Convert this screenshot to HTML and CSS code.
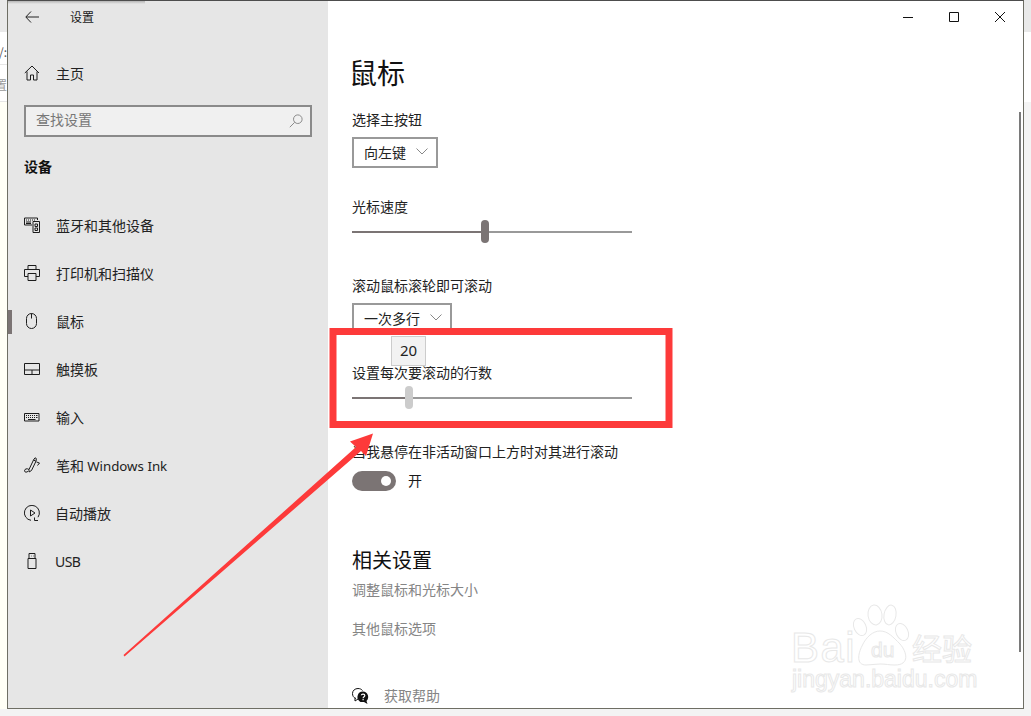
FILE: index.html
```html
<!DOCTYPE html>
<html lang="zh-CN">
<head>
<meta charset="utf-8">
<title>设置</title>
<link rel="stylesheet" href="styles.css">
</head>
<body>
<div class="desktop">
  <div class="strip strip-left">
    <div class="seg seg-top"></div>
    <div class="seg seg-addr"><span>:/</span></div>
    <div class="seg seg-menu"><span>置</span></div>
    <div class="seg seg-page"></div>
  </div>
  <div class="window">
    <aside class="sidebar">
      <div class="titlebar">
        <svg class="back" width="14" height="12" viewBox="0 0 14 12"><path d="M6 .5.8 6 6 11.500M1 6h13"/></svg>
        <span class="apptitle">设置</span>
      </div>
      <a class="row home">
        <svg class="ico" width="16" height="16" viewBox="0 0 16 16"><path d="M.8 8 8 1l7 7M3 6.500V15h3.500v-5h3v5H13V6.500"/></svg>
        <span>主页</span>
      </a>
      <div class="search">
        <span>查找设置</span>
        <svg class="ico-search" width="14" height="14" viewBox="0 0 14 14"><circle cx="8.800" cy="5.200" r="4.300"/><path d="M5.700 8.300.8 13.200"/></svg>
      </div>
      <h2 class="section">设备</h2>
      <nav class="nav">
        <a class="row">
          <svg class="ico" width="16" height="16" viewBox="0 0 16 16"><path d="M.5 1h13v2M.5 1v7H8M9 4.500h6.500v11H9zM2 3h1M4 3h1M6 3h1M8 3h1M10 3h1M2 5h5M2 6.500h5M11 7h2.500v2.500H11zM11 11h2.500v2.500H11z"/></svg>
          <span>蓝牙和其他设备</span>
        </a>
        <a class="row">
          <svg class="ico" width="16" height="16" viewBox="0 0 16 16"><path d="M4 4.500V.5h8v4M4 11.500H.5v-7h15v7H12M4 8.500h8v7H4z"/></svg>
          <span>打印机和扫描仪</span>
        </a>
        <a class="row active">
          <svg class="ico" width="16" height="16" viewBox="0 0 16 16"><path d="M2.500 5.500a5 5 0 0 1 10 0v5a5 5 0 0 1-10 0zM7.500 .5v5"/></svg>
          <span>鼠标</span>
        </a>
        <a class="row">
          <svg class="ico" width="16" height="16" viewBox="0 0 16 16"><path d="M.5 2.500h15v11H.5zM.5 9h15M8 9v4.500"/></svg>
          <span>触摸板</span>
        </a>
        <a class="row">
          <svg class="ico" width="16" height="16" viewBox="0 0 16 16"><path d="M.5 4.500h14.500v7.500H.5zM2 6.500h1M4 6.500h1M6 6.500h1M8 6.500h1M10 6.500h1M12 6.500h1.500M2 8.500h1M4 8.500h1M6 8.500h1M8 8.500h1M10 8.500h1M12 8.500h1.500M4 10.500h7.500"/></svg>
          <span>输入</span>
        </a>
        <a class="row">
          <svg class="ico" width="16" height="16" viewBox="0 0 16 16"><path d="M5 12.500 9.500 3 11 .8l1.300.7-.2 2.500L7.500 13.500l-2.500 1.500zM9.500 3l2.500 1.300M12.500 5l3 1-2 2.500M5 12.500c-2-1.500-4.500-.5-4.500 1.300 0 1.700 2.500 1.700 3.500.5"/></svg>
          <span>笔和 <b class="latin">Windows Ink</b></span>
        </a>
        <a class="row">
          <svg class="ico" width="16" height="16" viewBox="0 0 16 16"><path d="M7 15.300A7.500 7.500 0 1 1 14 12.200M6.500 5v6l4.500-3zM10.500 12.500v3h3.500"/></svg>
          <span class="tight">自动播放</span>
        </a>
        <a class="row">
          <svg class="ico" width="16" height="16" viewBox="0 0 16 16"><path d="M4 5.500h8v10H4zM5 5.500V.5h6v5M7 3h.5M9 3h.5"/></svg>
          <span class="tight latin">USB</span>
        </a>
      </nav>
    </aside>
    <main class="main">
      <div class="controls">
        <span class="ctl"><svg width="10" height="10" viewBox="0 0 10 10"><path d="M0 5.500h10"/></svg></span>
        <span class="ctl"><svg width="10" height="10" viewBox="0 0 10 10"><path d="M.5.500h9v9h-9z"/></svg></span>
        <span class="ctl"><svg width="10" height="10" viewBox="0 0 10 10"><path d="m0 0 10 10M10 0 0 10"/></svg></span>
      </div>
      <h1 class="title">鼠标</h1>
      <div class="label first">选择主按钮</div>
      <div class="select">
        <span>向左键</span>
        <svg width="12" height="7" viewBox="0 0 12 7"><path d="m.5.500 5.500 5.500 5.500-5.500"/></svg>
      </div>
      <div class="label gap">光标速度</div>
      <div class="slider">
        <div class="fill" style="width:129px"></div>
        <div class="thumb"></div>
        <div class="rest"></div>
      </div>
      <div class="label gap-lg">滚动鼠标滚轮即可滚动</div>
      <div class="select">
        <span>一次多行</span>
        <svg width="12" height="7" viewBox="0 0 12 7"><path d="m.5.500 5.500 5.500 5.500-5.500"/></svg>
      </div>
      <div class="label gap">设置每次要滚动的行数</div>
      <div class="slider">
        <div class="fill" style="width:53px"></div>
        <div class="thumb thumb-light"></div>
        <div class="rest"></div>
        <div class="tip">20</div>
      </div>
      <div class="label gap-lg">当我悬停在非活动窗口上方时对其进行滚动</div>
      <div class="toggle-row">
        <div class="toggle"><div class="knob"></div></div>
        <span>开</span>
      </div>
      <h2 class="subtitle">相关设置</h2>
      <a class="link link-first">调整鼠标和光标大小</a>
      <a class="link link-second">其他鼠标选项</a>
      <div class="help">
        <svg width="17" height="16" viewBox="0 0 17 16"><path class="help-o" d="M4 10.500C1.500 9.500.5 8 .5 5.500.5 2.500 3 .5 6 .5c2 0 3.500.8 4.500 2M3 10v3l3-2"/><path class="help-f" d="M11 3.500a5.500 5.500 0 0 0-2.500 10.400H12l3.500 2-1-3A5.500 5.500 0 0 0 11 3.500z"/><path class="help-q" d="M9.300 7.300c.2-1.700 3.500-1.700 3.500.2 0 1.300-1.700 1.300-1.700 2.700M11.100 11v1.200"/></svg>
        <span>获取帮助</span>
      </div>
      <div class="scrollbar"></div>
    </main>
  </div>
  <div class="strip strip-right">
    <div class="seg seg-top"></div>
    <div class="seg seg-white"></div>
    <div class="seg seg-dots"></div>
  </div>
  <div class="strip-bottom"></div>

  <svg class="annot" width="1031" height="716" viewBox="0 0 1031 716">
    <rect class="annot-box" x="333" y="331.500" width="336" height="93"/>
    <polygon class="annot-arrow" points="373,433.500 350,441.500 356,447 123.500,655 124.500,656.500 361,451 366,456"/>
    <g class="wm">
      <ellipse cx="875" cy="615" rx="7" ry="10" transform="rotate(-8 875 615)"/>
      <ellipse cx="890" cy="615" rx="6" ry="10" transform="rotate(10 890 615)"/>
      <ellipse cx="860" cy="627" rx="6" ry="9" transform="rotate(-25 860 627)"/>
      <ellipse cx="902" cy="632" rx="6" ry="9" transform="rotate(-25 902 632)"/>
      <path d="M862 646c4-9 11-15 18-15 8 0 13 6 20 13 7 8 10 21-5 21-6 0-9-1-15-1-5 0-9 1-14 1-10 0-8-11-4-19z"/>
      <text class="wm-big" x="791" y="662">Bai</text>
      <text class="wm-du" x="871" y="657">du</text>
      <text class="wm-cn" x="912" y="660">经验</text>
      <text class="wm-url" x="792" y="687">jingyan.baidu.com</text>
    </g>
  </svg>
</div>
</body>
</html>
```
FILE: styles.css
```css
* { box-sizing: border-box; }
html, body { margin: 0; padding: 0; overflow: hidden; }
body {
  font-family: "Noto Sans CJK SC", "Noto Sans", sans-serif;
  font-size: 14px;
  color: #1a1a1a;
  background: #fff;
}
h1, h2 { margin: 0; font-weight: 400; }
a { color: inherit; text-decoration: none; }
svg { display: block; flex: none; }

.desktop {
  position: relative;
  width: 1031px;
  height: 716px;
  display: grid;
  grid-template-columns: 7px 1017px 7px;
  grid-template-rows: 709px 7px;
  overflow: hidden;
}

/* Background peeking around the window */
.strip { display: flex; flex-direction: column; overflow: hidden; }
.seg { flex: none; overflow: hidden; font-size: 12px; line-height: 20px; color: #9a9a9a; }
.seg-top { height: 32px; background: #e9e9e9; }
.strip-left .seg span { display: block; width: 7px; white-space: nowrap; direction: rtl; }
.seg-addr { height: 33px; padding-top: 10px; background: #fff; border-bottom: 1px solid #e6e6e6; color: #555; }
.seg-menu { height: 37px; padding-top: 10px; background: #fff; border-bottom: 1px solid #e6e6e6; }
.seg-page { flex: 1; background: #fffff6; }
.seg-white { height: 70px; background: #fff; }
.seg-dots { flex: 1; background: #f4f4f4; }
.strip-bottom { grid-column: 1 / -1; background: #f3f3f3; }

/* Window */
.window {
  display: flex;
  border: 1px solid #6e6e64;
  border-top-color: #4d4d4d;
  background: #fff;
  min-height: 0;
}

/* Sidebar */
.sidebar { flex: none; width: 320px; background: #e6e6e6; }
.titlebar {
  height: 32px;
  display: flex;
  align-items: center;
  padding-left: 17px;
  background: linear-gradient(#b5b5b5, #e6e6e6) no-repeat 0 0 / 137px 3px;
}
.back { fill: none; stroke: #222; stroke-width: 1; }
.apptitle { margin-left: 31px; font-size: 12px; line-height: 32px; }
.row {
  position: relative;
  height: 48px;
  display: flex;
  align-items: center;
  padding-left: 16px;
  padding-bottom: 2px;
  color: #222;
  font-size: 14px;
}
.row span { margin-left: 16px; white-space: nowrap; }
.row span.tight { margin-left: 15px; }
.latin { font-family: "Noto Sans", sans-serif; font-weight: 400; }
b.latin { font-size: 13.3px; }
span.latin { font-size: 14px; letter-spacing: -.6px; }
.home { margin-top: 17px; }
.ico { fill: none; stroke: #1c1c1c; stroke-width: 1; }
.active::before {
  content: "";
  position: absolute;
  left: 0;
  top: 12px;
  width: 4px;
  height: 24px;
  background: #7b7474;
}
.search {
  margin: 7px 16px 0;
  height: 32px;
  width: 288px;
  padding: 0 7px 4px 10px;
  display: flex;
  align-items: center;
  justify-content: space-between;
  background: #f0f0f0;
  border: 2px solid #8a8a8a;
  color: #777;
}
.ico-search { fill: none; stroke: #8a8a8a; stroke-width: 1; margin-top: 4px; }
.section { margin: 19px 0 0 16px; font-size: 14px; line-height: 20px; font-weight: 700; color: #111; }
.nav { margin-top: 26px; }

/* Main pane */
.main { position: relative; flex: 1; padding-left: 24px; min-width: 0; overflow: hidden; }
.controls { position: absolute; top: 0; right: 0; height: 32px; display: flex; }
.ctl { width: 46px; height: 32px; display: flex; align-items: center; justify-content: center; }
.ctl svg { fill: none; stroke: #111; stroke-width: 1; }
.title { margin: 51px 0 0 -3px; font-size: 28px; line-height: 40px; color: #111; }
.label { height: 20px; font-size: 14px; line-height: 18px; white-space: nowrap; color: #222; }
.first { margin-top: 18px; }
.gap { margin-top: 29px; }
.gap-lg { margin-top: 33px; }
.select {
  margin-top: 7px;
  width: max-content;
  height: 31px;
  padding: 0 8px 2px 10px;
  display: flex;
  align-items: center;
  gap: 10px;
  border: 2px solid #999;
  font-size: 14px;
  line-height: 20px;
  color: #222;
}
.select svg { fill: none; stroke: #888; stroke-width: 1; }
.slider { position: relative; margin-top: 3px; width: 280px; height: 23px; display: flex; align-items: center; }
.fill { height: 2px; background: #7b7474; flex: none; }
.rest { height: 2px; background: #999; flex: 1; }
.thumb { width: 8px; height: 23px; border-radius: 4px; background: #7b7474; flex: none; }
.thumb-light { background: #ccc; }
.tip {
  position: absolute;
  left: 39px;
  top: -50px;
  width: 35px;
  height: 30px;
  padding-bottom: 2px;
  display: flex;
  align-items: center;
  justify-content: center;
  background: #f2f2f2;
  border: 1px solid #ccc;
  font-size: 15px;
  font-family: "Noto Sans", sans-serif;
  color: #222;
}
.toggle-row { margin-top: 9px; height: 20px; display: flex; align-items: center; gap: 12px; font-size: 14px; }
.toggle-row span { height: 20px; line-height: 18px; }
.toggle { width: 44px; height: 20px; border-radius: 10px; background: #7b7474; display: flex; align-items: center; justify-content: flex-end; padding-right: 5px; }
.knob { width: 10px; height: 10px; border-radius: 50%; background: #fff; }
.subtitle { margin-top: 55px; font-size: 20px; line-height: 28px; color: #111; }
.link { display: block; height: 20px; font-size: 14px; line-height: 18px; color: #858585; }
.link-first { margin-top: 6px; }
.link-second { margin-top: 19px; }
.help { margin-top: 47px; height: 20px; display: flex; align-items: center; gap: 15px; font-size: 14px; color: #858585; }
.help span { height: 20px; line-height: 18px; }
.help-o { fill: #fff; stroke: #111; stroke-width: 1; }
.help-f { fill: #111; }
.help-q { fill: none; stroke: #fff; stroke-width: 1.200; }
.scrollbar { position: absolute; right: 2px; top: 111px; width: 2px; height: 540px; background: #7a7a7a; }

/* Annotations drawn on top of the screenshot */
.annot { position: absolute; left: 0; top: 0; pointer-events: none; }
.annot-box { fill: none; stroke: #fd3a3a; stroke-width: 7; }
.annot-arrow { fill: #fd3a3a; }
.wm { fill: none; stroke: #e8e8e8; stroke-width: 1; }
.wm text { font-family: "Liberation Sans", sans-serif; fill: #fff; }
.wm-big { font-size: 42px; letter-spacing: 1.500px; }
.wm-du { font-size: 21px; }
.wm text.wm-cn { font-family: "Noto Sans CJK SC", sans-serif; font-size: 30px; }
.wm-url { font-size: 23px; letter-spacing: 0; }
```
